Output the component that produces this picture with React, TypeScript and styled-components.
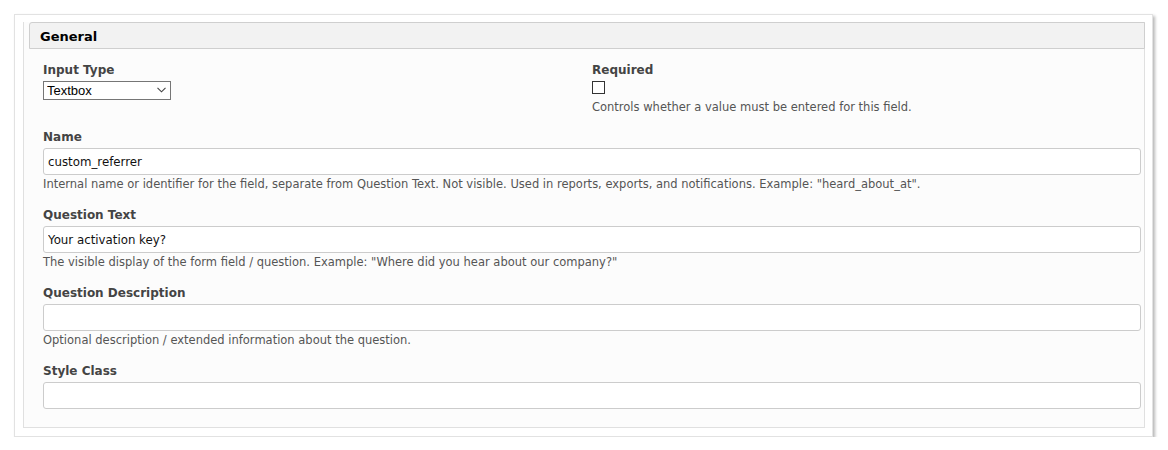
import styled, { createGlobalStyle } from "styled-components"

const GlobalStyle = createGlobalStyle`
    body {
        margin: 0;
        background: #ffffff;
        font-family: "DejaVu Sans", Verdana, sans-serif;
    }
`

type Field = {
    label: string
    value: string
    help?: string
}

const fields: Field[] = [
    {
        label: "Name",
        value: "custom_referrer",
        help: 'Internal name or identifier for the field, separate from Question Text. Not visible. Used in reports, exports, and notifications. Example: "heard_about_at".',
    },
    {
        label: "Question Text",
        value: "Your activation key?",
        help: 'The visible display of the form field / question. Example: "Where did you hear about our company?"',
    },
    {
        label: "Question Description",
        value: "",
        help: "Optional description / extended information about the question.",
    },
    {
        label: "Style Class",
        value: "",
    },
]

export default function App() {
    return (
        <Page>
            <GlobalStyle />
            <Card>
                <Panel>
                    <Header>General</Header>
                    <Body>
                        <TopRow>
                            <Cell>
                                <Label $tight>Input Type</Label>
                                <SelectWrap>
                                    <Select defaultValue="Textbox">
                                        <option>Textbox</option>
                                        <option>Textarea</option>
                                        <option>Dropdown</option>
                                    </Select>
                                    <Chevron width="9" height="6" viewBox="0 0 9 6">
                                        <path d="M0.5 0.8 L4.5 4.8 L8.5 0.8" fill="none" stroke="#444" strokeWidth="1.1" />
                                    </Chevron>
                                </SelectWrap>
                            </Cell>
                            <Cell>
                                <Label>Required</Label>
                                <Check type="checkbox" />
                                <Help $gap={6}>Controls whether a value must be entered for this field.</Help>
                            </Cell>
                        </TopRow>
                        {fields.map((f) => (
                            <Group key={f.label} $last={!f.help}>
                                <Label>{f.label}</Label>
                                <TextInput type="text" defaultValue={f.value} />
                                {f.help && <Help>{f.help}</Help>}
                            </Group>
                        ))}
                    </Body>
                </Panel>
            </Card>
        </Page>
    )
}

const Page = styled.div`
    padding: 14px 0 0 14px;
    width: 1168px;
    box-sizing: border-box;
`

const Card = styled.div`
    width: 1139px;
    box-sizing: border-box;
    background: #ffffff;
    border: 1px solid #e2e2e2;
    box-shadow: 2px 2px 3px #b8b8b8;
    padding: 7px 7px 8px 8px;
`

const Panel = styled.div`
    background: #fcfcfc;
    border: 1px solid #e0e0e0;
    border-top: none;
`

const Header = styled.div`
    margin-left: 5px;
    margin-right: -1px;
    height: 25px;
    box-sizing: content-box;
    background: #f2f2f2;
    border: 1px solid #cfcfcf;
    border-radius: 3px 0 0 0;
    padding: 0 0 0 10px;
    font-size: 13px;
    font-weight: bold;
    line-height: 27px;
    color: #000000;
    overflow: hidden;
`

const Body = styled.div`
    padding: 13px 3px 18px 19px;
`

const TopRow = styled.div`
    display: grid;
    grid-template-columns: 1fr 1fr;
    margin-bottom: 14px;
`

const Cell = styled.div`
    display: flex;
    flex-direction: column;
    align-items: flex-start;
`

const Group = styled.div<{ $last?: boolean }>`
    display: flex;
    flex-direction: column;
    align-items: flex-start;
    margin-bottom: ${(p) => (p.$last ? "0" : "15px")};
`

const Label = styled.div<{ $tight?: boolean }>`
    font-size: 12px;
    font-weight: bold;
    line-height: 16px;
    color: #444444;
    margin-bottom: ${(p) => (p.$tight ? "2px" : "3px")};
`

const SelectWrap = styled.div`
    position: relative;
    width: 128px;
    height: 19px;
`

const Select = styled.select`
    appearance: none;
    width: 128px;
    height: 19px;
    box-sizing: border-box;
    border: 1px solid #767676;
    border-radius: 0;
    background: #ffffff;
    padding: 0 0 0 3px;
    font-family: "Liberation Sans", Arial, sans-serif;
    font-size: 13px;
    color: #000000;
    outline: none;
`

const Chevron = styled.svg`
    position: absolute;
    right: 5px;
    top: 7px;
    pointer-events: none;
`

const Check = styled.input`
    appearance: none;
    margin: 0;
    width: 13px;
    height: 13px;
    box-sizing: border-box;
    border: 1px solid #333333;
    background: #ffffff;
    border-radius: 0;
`

const TextInput = styled.input`
    width: 100%;
    height: 27px;
    box-sizing: border-box;
    border: 1px solid #cccccc;
    border-radius: 3px;
    background: #ffffff;
    padding: 0 4px;
    font-family: "DejaVu Sans", Verdana, sans-serif;
    font-size: 11.8px;
    color: #111111;
    outline: none;
`

const Help = styled.div<{ $gap?: number }>`
    margin-top: ${(p) => p.$gap ?? 2}px;
    font-size: 11.5px;
    line-height: 15px;
    color: #555555;
`
